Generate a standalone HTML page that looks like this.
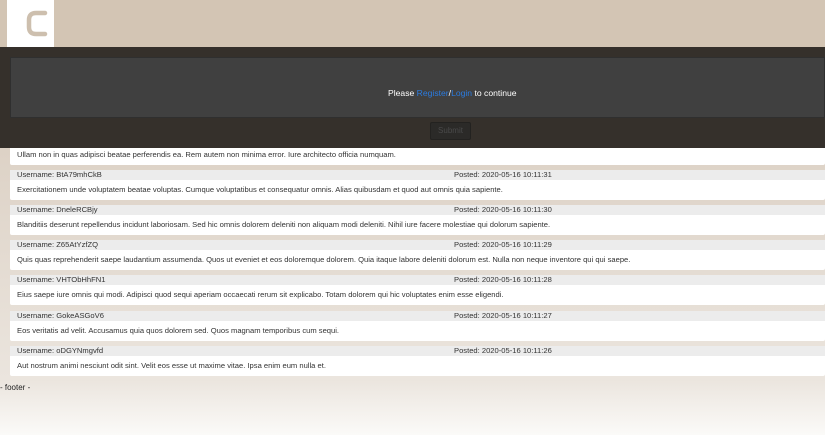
<!DOCTYPE html>
<html><head><style>
*{margin:0;padding:0;box-sizing:border-box}
body{width:825px;height:435px;overflow:hidden;font-family:"Liberation Sans",sans-serif;background:linear-gradient(#d6c9ba 0px,#ddd2c6 150px,#ebe5de 380px,#fbfaf8 435px);position:relative}
.hdr{position:absolute;left:0;top:0;width:825px;height:47px;background:#d3c5b4}
.logo{position:absolute;left:7px;top:0;width:47px;height:47px;background:#fff}
.ov{position:absolute;left:0;top:47px;width:825px;height:101px;background:#35302b;z-index:5}
.panel{position:absolute;left:10px;top:10px;width:815px;height:61px;background:#404040;border:1px solid #2f2f2f;color:#fff;font-size:8.6px;line-height:8.6px;padding:31px 0 0 377px}
.panel a{color:#2a7be0;text-decoration:none}
.btn{position:absolute;left:430px;top:75px;width:41px;height:18px;background:#2b2a28;border:1px solid #232220;border-radius:2px;color:#4a4a4a;font-size:8px;text-align:center;line-height:16px}
.post{position:absolute;left:10px;width:815px;font-size:7.6px;color:#333}
.ph{height:10px;background:#ececec;line-height:10px;padding-left:7px;position:relative}
.ph span{position:absolute;left:444px}
.pb{height:20px;background:#fff;line-height:20px;padding-left:7px;border-radius:0 0 2px 2px}
.foot{position:absolute;left:0;top:383px;font-size:8px;color:#222}
</style></head><body>
<div class="hdr"><div class="logo"><svg width="47" height="47"><path d="M38 13 H29 Q22 13 22 20 V27 Q22 34 29 34 H38" fill="none" stroke="#cdbfae" stroke-width="4.5" stroke-linecap="round"/></svg></div></div>
<div class="ov"><div class="panel">Please <a>Register</a>/<a>Login</a> to continue</div><div class="btn">Submit</div></div>
<div class="post" style="top:140px"><div class="pb" style="height:25px;line-height:30px">Ullam non in quas adipisci beatae perferendis ea. Rem autem non minima error. Iure architecto officia numquam.</div></div>
<div class="post" style="top:170px"><div class="ph">Username: BtA79mhCkB<span>Posted: 2020-05-16 10:11:31</span></div><div class="pb">Exercitationem unde voluptatem beatae voluptas. Cumque voluptatibus et consequatur omnis. Alias quibusdam et quod aut omnis quia sapiente.</div></div>
<div class="post" style="top:205px"><div class="ph">Username: DneleRCBjy<span>Posted: 2020-05-16 10:11:30</span></div><div class="pb">Blanditiis deserunt repellendus incidunt laboriosam. Sed hic omnis dolorem deleniti non aliquam modi deleniti. Nihil iure facere molestiae qui dolorum sapiente.</div></div>
<div class="post" style="top:240px"><div class="ph">Username: Z65AtYzfZQ<span>Posted: 2020-05-16 10:11:29</span></div><div class="pb">Quis quas reprehenderit saepe laudantium assumenda. Quos ut eveniet et eos doloremque dolorem. Quia itaque labore deleniti dolorum est. Nulla non neque inventore qui qui saepe.</div></div>
<div class="post" style="top:275px"><div class="ph">Username: VHTObHhFN1<span>Posted: 2020-05-16 10:11:28</span></div><div class="pb">Eius saepe iure omnis qui modi. Adipisci quod sequi aperiam occaecati rerum sit explicabo. Totam dolorem qui hic voluptates enim esse eligendi.</div></div>
<div class="post" style="top:311px"><div class="ph">Username: GokeASGoV6<span>Posted: 2020-05-16 10:11:27</span></div><div class="pb">Eos veritatis ad velit. Accusamus quia quos dolorem sed. Quos magnam temporibus cum sequi.</div></div>
<div class="post" style="top:346px"><div class="ph">Username: oDGYNmgvfd<span>Posted: 2020-05-16 10:11:26</span></div><div class="pb">Aut nostrum animi nesciunt odit sint. Velit eos esse ut maxime vitae. Ipsa enim eum nulla et.</div></div>
<div class="foot">- footer -</div>
</body></html>
